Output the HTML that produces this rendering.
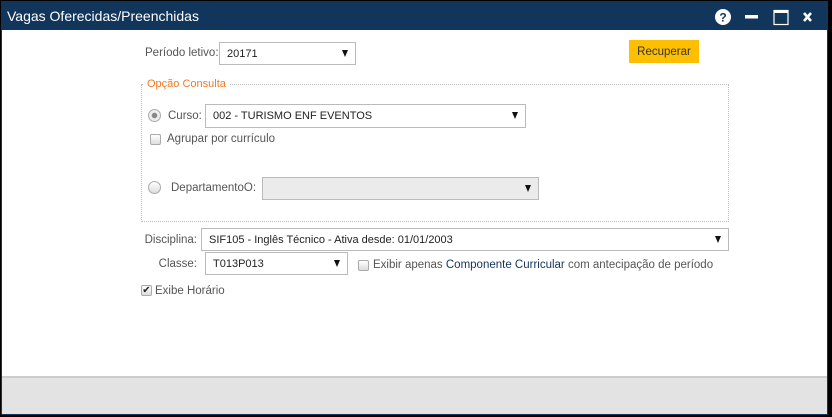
<!DOCTYPE html>
<html><head><meta charset="utf-8"><style>
*{margin:0;padding:0;box-sizing:border-box}
html,body{width:832px;height:417px;overflow:hidden;background:#000;font-family:"Liberation Sans",sans-serif;font-size:11.5px;color:#555}
.win{position:absolute;left:1px;top:1px;width:827px;height:414px;background:#fff;border:1px solid #12355b}
.title{position:absolute;left:0;top:0;width:100%;height:28px;background:#12355b;color:#fff;font-size:14px;line-height:28px;padding-left:5px}
.abs{position:absolute;white-space:nowrap}
.sel{position:absolute;border:1px solid #bbb;background:#fff;color:#222;font-size:11px;padding-left:7px;display:flex;align-items:center}
.sel:after{content:"";position:absolute;right:7px;top:50%;margin-top:-4px;border-left:3px solid transparent;border-right:3px solid transparent;border-top:7px solid #111}
.cb{position:absolute;width:11px;height:11px;border:1px solid #aaa;border-radius:2px;background:linear-gradient(#fff,#ddd)}
.rd{position:absolute;width:13px;height:13px;border:1px solid #aaa;border-radius:50%;background:linear-gradient(#fff,#ddd)}
.footer{position:absolute;left:0;top:374px;width:100%;height:38px;background:#e3e3e3;border-top:2px solid #ccc}
</style></head><body>
<div class="win">
<div class="title">Vagas Oferecidas/Preenchidas
<svg class="abs" style="left:712px;top:6px" width="100" height="18">
<circle cx="9" cy="9" r="8" fill="#fff"/><text x="9" y="13.5" fill="#12355b" font-size="12" font-weight="bold" text-anchor="middle" font-family="Liberation Sans">?</text>
<rect x="31" y="7" width="13" height="3.5" fill="#fff"/>
<rect x="60" y="2.5" width="14" height="14" fill="none" stroke="#fff" stroke-width="1.2"/><rect x="60" y="2.5" width="14" height="2.5" fill="#fff"/>
<path d="M90 5 L97 13 M97 5 L90 13" stroke="#fff" stroke-width="2.6"/>
</svg></div>
<div class="abs" style="left:143px;top:45px">Período letivo:</div>
<div class="sel" style="left:217px;top:40px;width:137px;height:23px">20171</div>
<div class="abs" style="left:627px;top:38px;width:70px;height:23px;background:#fdbf00;color:#333;line-height:25px;text-align:center">Recuperar</div>
<div class="abs" style="left:139px;top:82px;width:588px;height:138px;border:1px dotted #bbb"></div>
<div class="abs" style="left:142px;top:76px;background:#fff;color:#f47920;padding:0 3px;font-size:11px">Opção Consulta</div>
<div class="rd" style="left:146px;top:107px;background:radial-gradient(#888 30%,#eee 40%)"></div>
<div class="abs" style="left:166px;top:108px">Curso:</div>
<div class="sel" style="left:203px;top:102px;width:321px;height:24px">002 - TURISMO ENF EVENTOS</div>
<div class="cb" style="left:148px;top:132px"></div>
<div class="abs" style="left:165px;top:131px">Agrupar por currículo</div>
<div class="rd" style="left:146px;top:179px"></div>
<div class="abs" style="left:169px;top:180px">DepartamentoO:</div>
<div class="sel" style="left:260px;top:175px;width:277px;height:23px;background:#ebebeb"></div>
<div class="abs" style="left:195px;top:232px;transform:translateX(-100%)">Disciplina:</div>
<div class="sel" style="left:199px;top:226px;width:528px;height:23px">SIF105 - Inglês Técnico - Ativa desde: 01/01/2003</div>
<div class="abs" style="left:195px;top:256px;transform:translateX(-100%)">Classe:</div>
<div class="sel" style="left:203px;top:250px;width:143px;height:23px">T013P013</div>
<div class="cb" style="left:356px;top:258px"></div>
<div class="abs" style="left:371px;top:257px">Exibir apenas <span style="color:#12355b">Componente Curricular</span> com antecipação de período</div>
<div class="cb" style="left:139px;top:283px;font-size:10px;line-height:9px;color:#222;text-align:center">✔</div>
<div class="abs" style="left:153px;top:283px">Exibe Horário</div>
<div class="footer"></div>
</div>
</body></html>
